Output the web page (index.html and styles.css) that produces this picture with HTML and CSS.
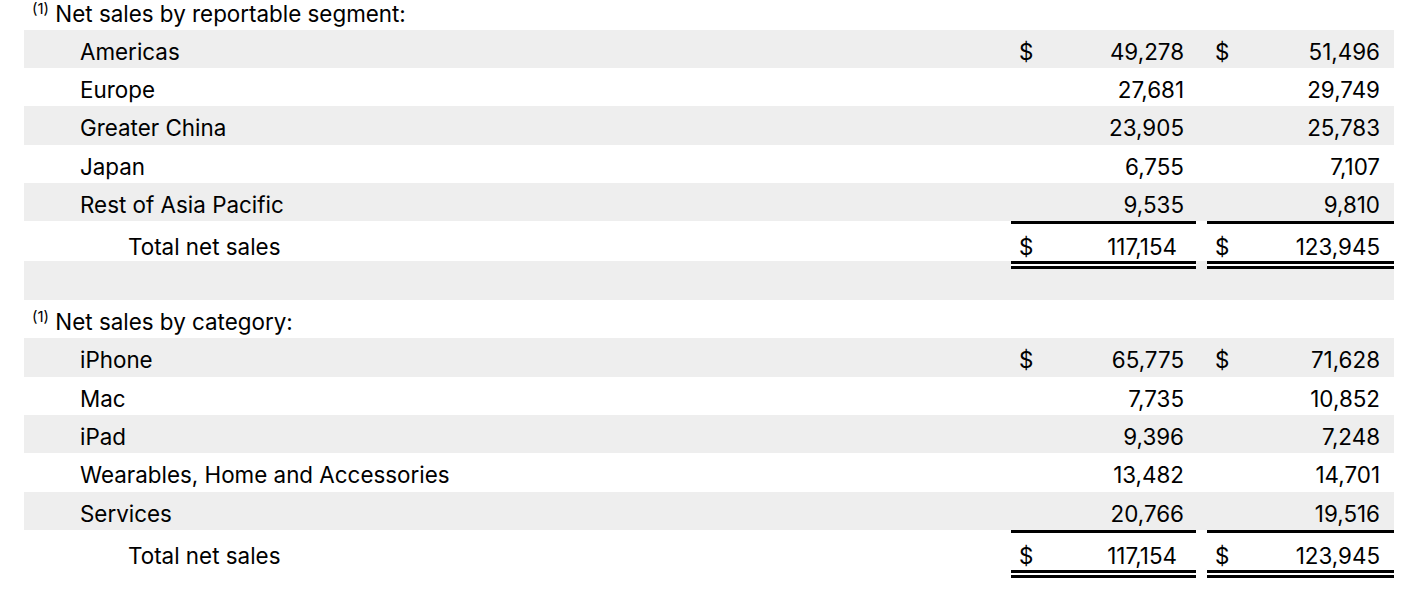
FILE: index.html
```html
<!DOCTYPE html>
<html lang="en">
<head>
<meta charset="utf-8">
<title>Net sales</title>
<link rel="stylesheet" href="styles.css">
</head>
<body>
<div class="sheet">
  <div class="row head first">
    <div class="label"><sup class="note">(1)</sup> Net sales by reportable segment:</div>
  </div>
  <div class="row shade">
    <div class="label">Americas</div>
    <div class="cell a"><span class="cur">$</span><span class="num">49,278</span></div>
    <div class="cell b"><span class="cur">$</span><span class="num">51,496</span></div>
  </div>
  <div class="row">
    <div class="label">Europe</div>
    <div class="cell a"><span class="cur"></span><span class="num">27,681</span></div>
    <div class="cell b"><span class="cur"></span><span class="num">29,749</span></div>
  </div>
  <div class="row shade">
    <div class="label">Greater China</div>
    <div class="cell a"><span class="cur"></span><span class="num">23,905</span></div>
    <div class="cell b"><span class="cur"></span><span class="num">25,783</span></div>
  </div>
  <div class="row">
    <div class="label">Japan</div>
    <div class="cell a"><span class="cur"></span><span class="num">6,755</span></div>
    <div class="cell b"><span class="cur"></span><span class="num">7,107</span></div>
  </div>
  <div class="row shade">
    <div class="label">Rest of Asia Pacific</div>
    <div class="cell a"><span class="cur"></span><span class="num">9,535</span></div>
    <div class="cell b"><span class="cur"></span><span class="num">9,810</span></div>
  </div>
  <div class="row total into-shade">
    <div class="label">Total net sales</div>
    <div class="cell a"><span class="cur">$</span><span class="num">117,154</span></div>
    <div class="cell b"><span class="cur">$</span><span class="num">123,945</span></div>
  </div>
  <div class="row shade spacer"></div>
  <div class="row head">
    <div class="label"><sup class="note">(1)</sup> Net sales by category:</div>
  </div>
  <div class="row shade">
    <div class="label">iPhone</div>
    <div class="cell a"><span class="cur">$</span><span class="num">65,775</span></div>
    <div class="cell b"><span class="cur">$</span><span class="num">71,628</span></div>
  </div>
  <div class="row">
    <div class="label">Mac</div>
    <div class="cell a"><span class="cur"></span><span class="num">7,735</span></div>
    <div class="cell b"><span class="cur"></span><span class="num">10,852</span></div>
  </div>
  <div class="row shade">
    <div class="label">iPad</div>
    <div class="cell a"><span class="cur"></span><span class="num">9,396</span></div>
    <div class="cell b"><span class="cur"></span><span class="num">7,248</span></div>
  </div>
  <div class="row">
    <div class="label">Wearables, Home and Accessories</div>
    <div class="cell a"><span class="cur"></span><span class="num">13,482</span></div>
    <div class="cell b"><span class="cur"></span><span class="num">14,701</span></div>
  </div>
  <div class="row shade">
    <div class="label">Services</div>
    <div class="cell a"><span class="cur"></span><span class="num">20,766</span></div>
    <div class="cell b"><span class="cur"></span><span class="num">19,516</span></div>
  </div>
  <div class="row total">
    <div class="label">Total net sales</div>
    <div class="cell a"><span class="cur">$</span><span class="num">117,154</span></div>
    <div class="cell b"><span class="cur">$</span><span class="num">123,945</span></div>
  </div>
</div>
</body>
</html>
```

FILE: styles.css
```css
html, body {
  margin: 0;
  padding: 0;
  background: #ffffff;
}

body {
  font-family: Inter, "Noto Sans", sans-serif;
  font-size: 22.4px;
  color: #000000;
}

.sheet {
  padding: 0 14px 20px 24px;
}

.row {
  display: grid;
  grid-template-columns: 1fr 185px 187px;
  column-gap: 11px;
  height: 38.4px;
  line-height: 26px;
  box-sizing: border-box;
}

.shade {
  background: #eeeeee;
}

.label {
  padding: 9px 0 0 56px;
  white-space: nowrap;
}

.head .label {
  padding: 9px 0 0 8px;
}

.head.first {
  height: 29.5px;
}

.head.first .label {
  padding-top: 1px;
}

.note {
  font-size: 15px;
  line-height: 0;
  vertical-align: 8px;
}

.cell {
  display: flex;
  justify-content: space-between;
  padding: 9px 14px 0 8px;
}

.cell.a {
  padding-right: 12px;
}

.total {
  height: 48px;
}

.total.into-shade {
  background: linear-gradient(to bottom, transparent 40px, #eeeeee 40px);
}

.spacer {
  height: 30.4px;
}

.total .label {
  padding: 13px 0 0 104px;
}

.total .cell {
  background: #ffffff;
  border-top: 3px solid #000000;
  border-bottom: 8px double #000000;
  padding-top: 10px;
}

.total .cell.a {
  padding-right: 19px;
}
```
